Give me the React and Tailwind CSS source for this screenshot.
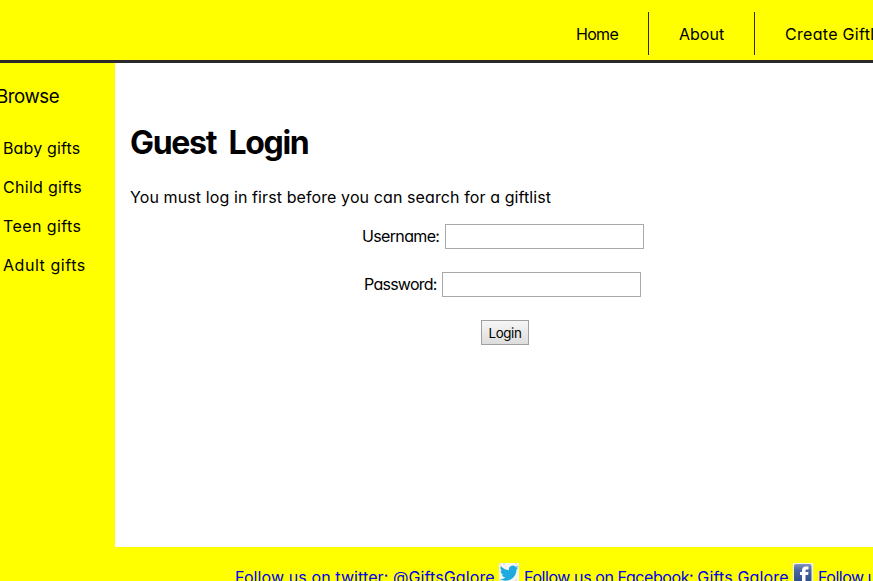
const categories = [
  { name: 'Baby gifts', tracking: 'tracking-[0.15px]' },
  { name: 'Child gifts', tracking: 'tracking-[0.3px]' },
  { name: 'Teen gifts', tracking: 'tracking-[0.4px]' },
  { name: 'Adult gifts', tracking: 'tracking-[0.55px]' },
];

function TwitterIcon() {
  return (
    <svg viewBox="0 0 20 20" className="block h-5 w-5 shrink-0">
      <rect width="20" height="20" fill="#f4f5f4" />
      <path d="M0 0h2v2H0zM4 0h2v2H4zM16 0h2v2h-2zM18 2h2v2h-2zM0 16h2v2H0zM16 16h2v2h-2z" fill="#e4e6e6" />
      <path
        d="M19.300 4.300c-.7.300-1.400.5-2.100.6.8-.5 1.300-1.200 1.600-2-.7.4-1.500.7-2.300.9a3.900 3.900 0 0 0-6.600 3.400c-3.200-.1-6-1.700-7.900-4.100-1 1.800-.5 4 1.200 5.200-.6 0-1.200-.2-1.700-.5 0 1.900 1.300 3.500 3.100 3.900-.6.1-1.100.2-1.700.1.500 1.600 1.900 2.600 3.600 2.700A7.800 7.800 0 0 1 .8 16.100c7 4.200 16.700-.4 16.700-9.700.8-.5 1.400-1.200 1.800-2.100z"
        fill="#1eaadf"
      />
    </svg>
  );
}

function FacebookIcon() {
  return (
    <svg viewBox="0 0 20 20" className="block h-5 w-5 shrink-0">
      <defs>
        <linearGradient id="fb" x1="0" y1="0" x2="0" y2="1">
          <stop offset="0" stopColor="#8395bd" />
          <stop offset=".35" stopColor="#4c66a0" />
          <stop offset="1" stopColor="#314d88" />
        </linearGradient>
      </defs>
      <rect width="20" height="20" fill="#f1f2f5" />
      <rect x="1" y="1" width="17.500" height="18" rx="2" fill="url(#fb)" />
      <path d="M9 19v-7H7V9h2V7.500C9 5 10.500 3.500 13 3.500h2.500v3h-1.700c-1 0-1.300.5-1.300 1.300V9h3l-.4 3h-2.600v7z" fill="#fff" />
    </svg>
  );
}

export default function App() {
  return (
    <div className="flex h-[581px] w-[873px] flex-col overflow-hidden bg-white font-['Comic_Sans_MS','Inter',sans-serif] text-[16px] leading-[22px] whitespace-nowrap text-black [font-feature-settings:'cv11']">
      <header className="h-[63px] shrink-0 border-b-[3px] border-[#2a2a2a] bg-[#ffff00] pt-3">
        <nav className="ml-[546px] flex h-[43px] w-[420px] items-center">
          <a className="flex h-full w-[103px] shrink-0 items-center border-r border-[#2a2a2a] pl-[30px] tracking-[-0.7px]">Home</a>
          <a className="flex h-full w-[106px] shrink-0 items-center border-r border-[#2a2a2a] pl-[30px]">About</a>
          <a className="pl-[30px] tracking-[0.3px]">Create Giftlist</a>
        </nav>
      </header>
      <div className="flex h-[484px] shrink-0">
        <aside className="w-[115px] shrink-0 bg-[#ffff00] pt-[21px]">
          <h2 className="-ml-1 text-[18.700px] leading-[26px] tracking-[-0.45px]">Browse</h2>
          <ul className="mt-[27px] ml-[3px] flex flex-col gap-[17px]">
            {categories.map((c) => (
              <li key={c.name} className={c.tracking}>{c.name}</li>
            ))}
          </ul>
        </aside>
        <main className="flex-1 pt-[58px] pl-[15px]">
          <h1 className="text-[32px] leading-[44px] font-bold tracking-[-1.300px] [word-spacing:6px]">Guest Login</h1>
          <p className="mt-[21px] tracking-[0.1px]">You must log in first before you can search for a giftlist</p>
          <form className="flex w-[743px] flex-col">
            <label className="mt-4 ml-[232px] flex h-[25px] items-center">
              <span className="w-[83px] pb-0.5 tracking-[-0.65px]">Username:</span>
              <input className="h-[25px] w-[199px] border border-[#a9a9a9] bg-white" />
            </label>
            <label className="mt-[23px] ml-[234px] flex h-[25px] items-center">
              <span className="w-[78px] pb-0.5 tracking-[-0.75px]">Password:</span>
              <input className="h-[25px] w-[199px] border border-[#a9a9a9] bg-white" />
            </label>
            <button
              type="button"
              className="mt-[23px] ml-[351px] flex h-[25px] w-12 items-center justify-center border border-[#a0a0a0] bg-linear-to-b from-[#f6f6f6] to-[#dddddd] text-[13.333px] tracking-[-0.4px]"
            >
              Login
            </button>
          </form>
        </main>
      </div>
      <footer className="flex flex-1 bg-[#ffff00] pt-4 pl-[235px] text-[#0000ee]">
        <a className="mt-[3px] w-[264px] shrink-0 tracking-[0.1px]">Follow us on twitter: @GiftsGalore</a>
        <TwitterIcon />
        <a className="mt-[3px] ml-[5px] w-[269px] shrink-0 tracking-[-0.420px]">
          Follow us on Facebook: <span className="tracking-[0.150px]">Gifts Galore</span>
        </a>
        <FacebookIcon />
        <a className="mt-[3px] ml-[5px] tracking-[-0.5px]">Follow us on Instagram</a>
      </footer>
    </div>
  );
}
